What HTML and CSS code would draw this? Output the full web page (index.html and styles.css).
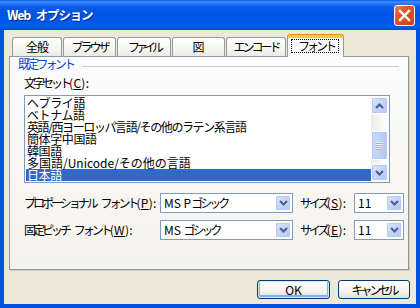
FILE: index.html
```html
<!DOCTYPE html>
<html lang="ja">
<head>
<meta charset="utf-8">
<title>Web オプション</title>
<link rel="stylesheet" href="styles.css">
</head>
<body>
<div class="window">
  <div class="titlebar">
    <span class="title">Web オプション</span>
    <div class="close">
      <svg width="13" height="13" viewBox="0 0 13 13"><path d="M2 2 L11 11 M11 2 L2 11" stroke="#fff" stroke-width="2.4" stroke-linecap="square"/></svg>
    </div>
  </div>
  <div class="client">
    <div class="tabs">
      <div class="tab w50 ls-1">全般</div>
      <div class="tab w53 ls-3">ブラウザ</div>
      <div class="tab w54 ls-4">ファイル</div>
      <div class="tab w53">図</div>
      <div class="tab w60 ls-3">エンコード</div>
      <div class="tab tab-sel"><span class="focus ls-3">フォント</span></div>
    </div>
    <div class="panel">
      <div class="section"><span class="section-label">既定フォント</span><span class="section-line"></span></div>
      <div class="field-label"><span class="k">文字セット</span><span class="acc">(<u>C</u>):</span></div>
      <div class="listbox">
        <ul class="items">
          <li>ヘブライ語</li>
          <li>ベトナム語</li>
          <li class="tight">英語/西ヨーロッパ言語/その他のラテン系言語</li>
          <li>簡体字中国語</li>
          <li>韓国語</li>
          <li class="wide">多国語/Unicode/その他の言語</li>
          <li class="selected">日本語</li>
        </ul>
        <div class="vscroll">
          <div class="sb-btn"><svg width="9" height="6" viewBox="0 0 9 6"><path d="M1 5 L4.5 1.5 L8 5" fill="none" stroke="#4D6185" stroke-width="2"/></svg></div>
          <div class="sb-gap1"></div>
          <div class="sb-thumb"><span class="grip"></span></div>
          <div class="sb-gap2"></div>
          <div class="sb-btn"><svg width="9" height="6" viewBox="0 0 9 6"><path d="M1 1 L4.5 4.5 L8 1" fill="none" stroke="#4D6185" stroke-width="2"/></svg></div>
        </div>
      </div>
      <div class="font-row first">
        <span class="row-label"><span class="k">プロポーショナル フォント</span><span class="acc">(<u>P</u>):</span></span>
        <div class="combo combo-name"><span class="combo-text">MS P<span class="k">ゴシック</span></span><span class="drop"><svg width="9" height="6" viewBox="0 0 9 6"><path d="M1 1 L4.5 4.5 L8 1" fill="none" stroke="#4D6185" stroke-width="2"/></svg></span></div>
        <span class="size-label"><span class="k">サイズ</span><span class="acc">(<u>S</u>):</span></span>
        <div class="combo combo-size"><span class="combo-text">11</span><span class="drop"><svg width="9" height="6" viewBox="0 0 9 6"><path d="M1 1 L4.5 4.5 L8 1" fill="none" stroke="#4D6185" stroke-width="2"/></svg></span></div>
      </div>
      <div class="font-row second">
        <span class="row-label"><span class="k">固定ピッチ フォント</span><span class="acc">(<u>W</u>):</span></span>
        <div class="combo combo-name"><span class="combo-text">MS <span class="k">ゴシック</span></span><span class="drop"><svg width="9" height="6" viewBox="0 0 9 6"><path d="M1 1 L4.5 4.5 L8 1" fill="none" stroke="#4D6185" stroke-width="2"/></svg></span></div>
        <span class="size-label"><span class="k">サイズ</span><span class="acc">(<u>E</u>):</span></span>
        <div class="combo combo-size"><span class="combo-text">11</span><span class="drop"><svg width="9" height="6" viewBox="0 0 9 6"><path d="M1 1 L4.5 4.5 L8 1" fill="none" stroke="#4D6185" stroke-width="2"/></svg></span></div>
      </div>
    </div>
    <div class="buttons">
      <button class="btn btn-default">OK</button>
      <button class="btn btn-cancel">キャンセル</button>
    </div>
  </div>
</div>
</body>
</html>
```
FILE: styles.css
```css
* { box-sizing: border-box; }
html, body { margin: 0; padding: 0; background: #ffffff; }
body {
  width: 420px;
  height: 308px;
  overflow: hidden;
  font-family: "Noto Sans CJK JP", "Noto Sans", sans-serif;
  font-size: 12px;
  color: #000;
}
.window {
  width: 420px;
  height: 308px;
  display: flex;
  flex-direction: column;
}
.titlebar {
  height: 30px;
  flex: none;
  display: flex;
  align-items: flex-start;
  background: linear-gradient(to bottom, #0A5FF0 0px, #3F8CF8 2px, #2473F2 4px, #0A5CEB 7px, #0054E3 14px, #0057E8 22px, #0060F2 26px, #0049D6 30px);
}
.title {
  margin: 8px 0 0 7px;
  color: #fff;
  font-weight: bold;
  font-size: 12.5px;
  line-height: 14px;
  letter-spacing: -1.2px;
  word-spacing: 4px;
  text-shadow: 1px 1px 0 #0A2A8A;
}
.close {
  margin: 5px 5px 0 auto;
  width: 21px;
  height: 21px;
  border: 1px solid #fff;
  border-radius: 3px;
  background: linear-gradient(135deg, #F08060 0%, #E2552C 35%, #CC4114 100%);
  display: flex;
  align-items: center;
  justify-content: center;
}
.close svg { display: block; }
.client {
  flex: 1;
  background: #ECE9D8;
  border: solid #0552E0;
  border-width: 0 4px 4px 4px;
  display: flex;
  flex-direction: column;
}
.tabs {
  height: 26px;
  flex: none;
  display: flex;
  align-items: flex-end;
  padding-left: 8px;
  gap: 1px;
}
.tab {
  height: 19px;
  border: 1px solid #919B9C;
  border-bottom: none;
  border-radius: 3px 3px 0 0;
  background: linear-gradient(to bottom, #FFFFFF 0%, #F7F7F4 50%, #ECEBE6 100%);
  text-align: center;
  line-height: 17px;
  white-space: nowrap;
}
.ls-1 { letter-spacing: -1px; }
.ls-3 { letter-spacing: -3px; }
.ls-4 { letter-spacing: -4px; }
.w50 { width: 50px; }
.w53 { width: 53px; }
.w54 { width: 54px; }
.w60 { width: 60px; }
.tab-sel {
  width: 57px;
  height: 22px;
  margin-bottom: -1px;
  position: relative;
  z-index: 2;
  border-top: 3px solid #FFC83C;
  border-radius: 3px 3px 0 0;
  background: #FCFCFE;
  box-shadow: 0 -1px 0 #E68B2C;
  display: flex;
  justify-content: flex-start;
  align-items: flex-start;
  padding: 1px 0 0 3px;
}
.focus {
  display: block;
  width: 48px;
  height: 14px;
  border: 1px dotted #000;
  line-height: 12px;
  text-align: center;
  padding-left: 2px;
}
.panel {
  margin-left: 5px;
  width: 400px;
  height: 214px;
  flex: none;
  border: 1px solid #919B9C;
  background: linear-gradient(to bottom, #FCFCFE 0%, #F8F7F4 50%, #F4F2EC 100%);
  box-shadow: 1px 1px 0 #D0CEBF;
  position: relative;
  z-index: 1;
}
.section {
  display: flex;
  margin: 1px 9px 0 8px;
  height: 12px;
}
.section-label {
  color: #0046D5;
  line-height: 12px;
  white-space: nowrap;
  letter-spacing: -2.8px;
}
.section-line {
  flex: 1;
  height: 1px;
  margin: 8px 0 0 9px;
  background: #D0D0BF;
}
.k { letter-spacing: -3px; word-spacing: 5px; }
.acc { letter-spacing: 0.3px; }
.field-label {
  margin: 7px 0 0 14px;
  line-height: 12px;
  white-space: nowrap;
}
u { text-decoration: underline; text-underline-offset: 1px; }
.listbox {
  margin: 6px 0 0 14px;
  width: 366px;
  height: 88px;
  border: 1px solid #7F9DB9;
  background: #fff;
  padding: 1px;
  display: flex;
}
.items {
  list-style: none;
  margin: 0;
  padding: 0;
  width: 346px;
}
.items li {
  height: 12px;
  line-height: 12px;
  padding-left: 1px;
  white-space: nowrap;
  letter-spacing: -0.4px;
}
.items li.tight { letter-spacing: -1.4px; }
.items li.wide { letter-spacing: 0px; }
.items li.selected { background: #316AC5; color: #fff; }
.vscroll {
  width: 17px;
  display: flex;
  flex-direction: column;
  background: linear-gradient(to right, #EEEDE5, #FFFFFF);
}
.sb-btn, .drop {
  border: 1px solid #fff;
  border-radius: 2px;
  background: linear-gradient(135deg, #DCE6FE 0%, #C4D4FC 50%, #B4C8F6 100%);
  box-shadow: inset 0 0 0 1px #B6C9F5;
  display: flex;
  align-items: center;
  justify-content: center;
}
.sb-btn { height: 17px; }
.sb-btn svg, .drop svg { display: block; }
.sb-gap1 { height: 17px; }
.sb-gap2 { height: 4px; }
.sb-thumb {
  height: 29px;
  border: 1px solid #fff;
  border-radius: 2px;
  background: linear-gradient(to right, #C9D8FC 0%, #BCD0FB 60%, #B0C6F6 100%);
  box-shadow: inset 0 0 0 1px #B4C8F5;
  display: flex;
  align-items: center;
  justify-content: center;
}
.grip {
  display: block;
  width: 7px;
  height: 8px;
  background: repeating-linear-gradient(to bottom, #EEF4FE 0px, #EEF4FE 1px, #8CB0F8 1px, #8CB0F8 2px);
}
.font-row {
  display: flex;
  align-items: center;
  height: 20px;
  margin-left: 14px;
}
.font-row.first { margin-top: 10px; }
.font-row.second { margin-top: 7px; }
.row-label {
  width: 136px;
  white-space: nowrap;
  line-height: 12px;
}
.size-label {
  width: 54px;
  margin-left: 7px;
  white-space: nowrap;
  line-height: 12px;
}
.combo {
  height: 20px;
  border: 1px solid #7F9DB9;
  background: #fff;
  display: flex;
  align-items: stretch;
  padding: 1px;
}
.combo-name { width: 133px; }
.combo-size { width: 50px; }
.combo-text {
  flex: 1;
  padding-left: 2px;
  line-height: 16px;
  white-space: nowrap;
}
.drop { width: 16px; }
.buttons {
  display: flex;
  justify-content: flex-end;
  gap: 8px;
  margin-top: 10px;
  padding-right: 6px;
}
.btn {
  height: 19px;
  border: 1px solid #003C74;
  border-radius: 3px;
  background: linear-gradient(to bottom, #FFFFFF 0%, #F4F3EE 60%, #E3E1D6 100%);
  font-family: "Noto Sans CJK JP", "Noto Sans", sans-serif;
  font-size: 12px;
  line-height: 15px;
  color: #000;
  padding: 0;
  margin: 0;
}
.btn-default {
  width: 73px;
  box-shadow: inset 0 0 0 1px #CEE7FF, inset 0 -1px 0 2px #89ADE4;
}
.btn-cancel { width: 72px; letter-spacing: -3px; }
```
